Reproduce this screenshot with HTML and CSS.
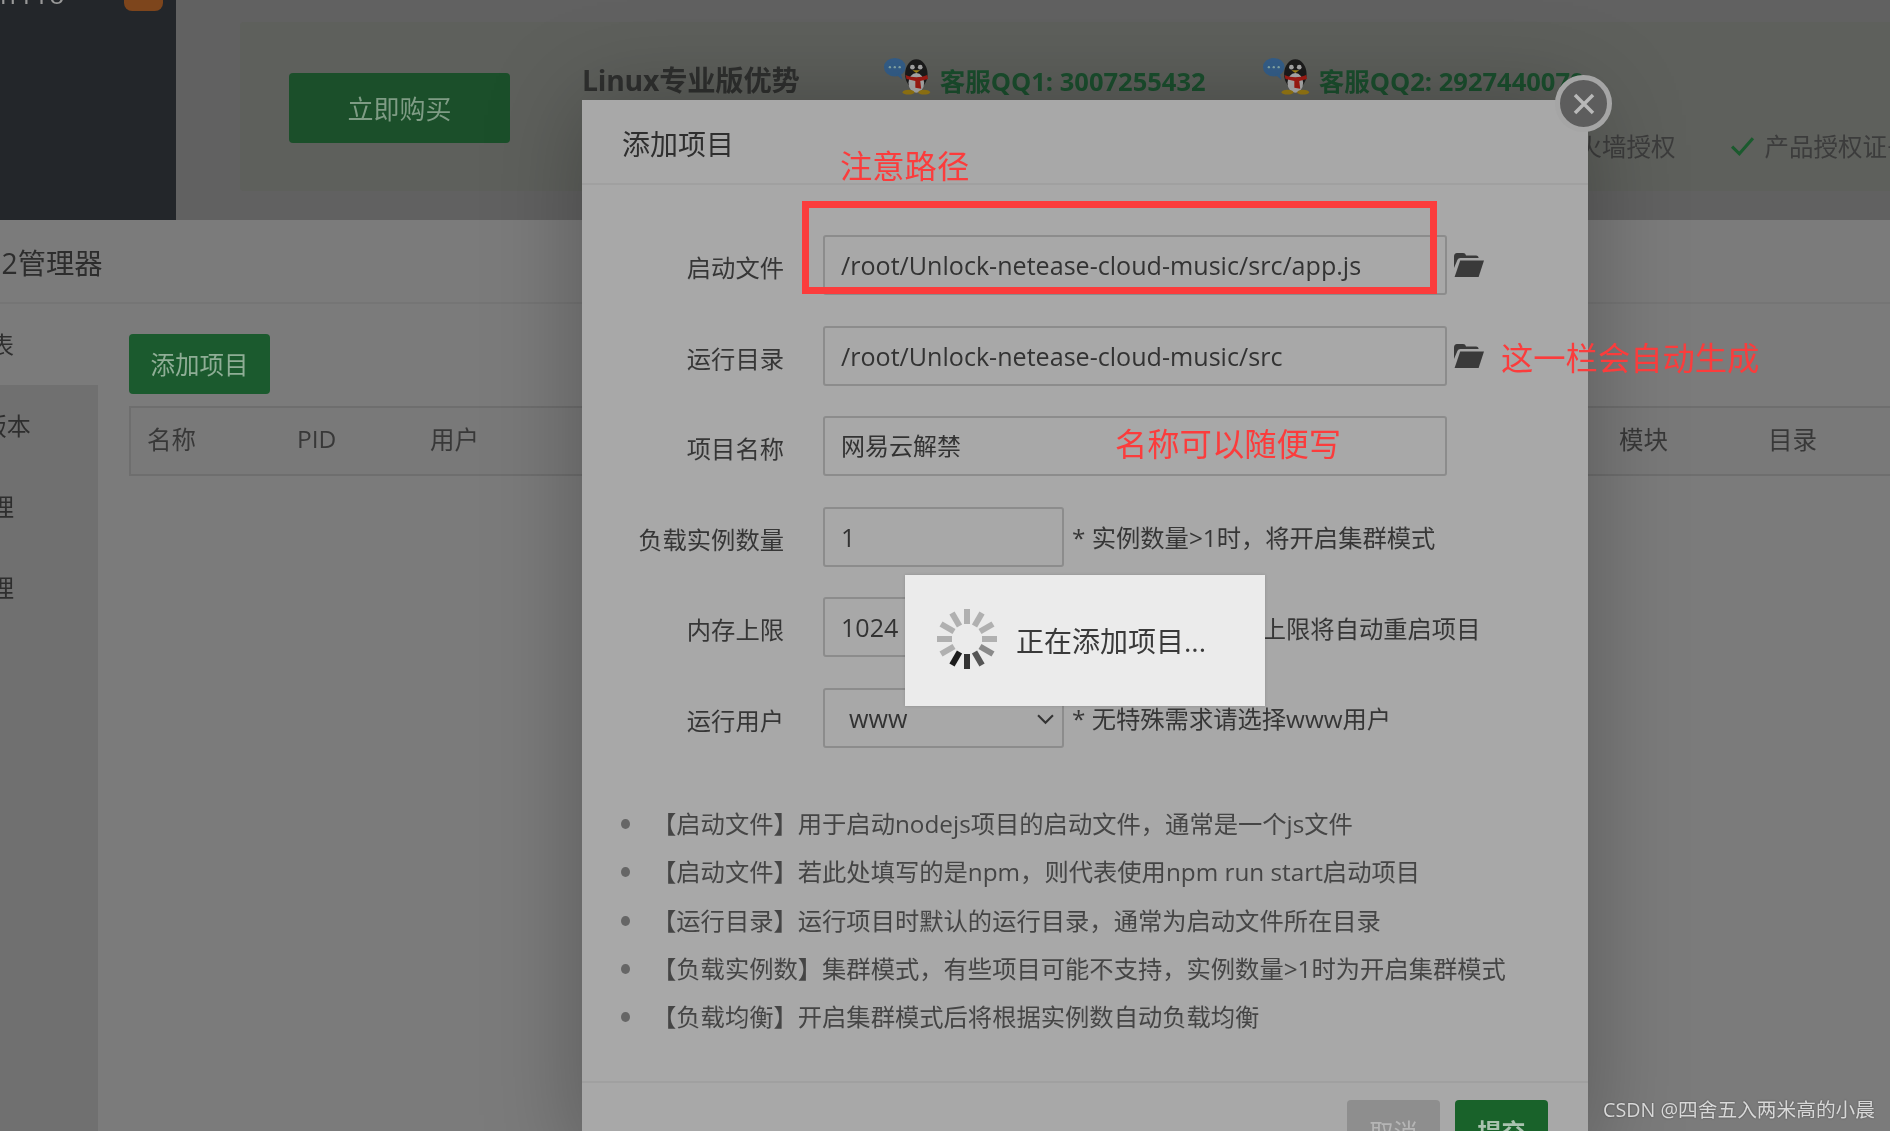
FILE: index.html
```html
<!DOCTYPE html>
<html lang="zh-CN">
<head>
<meta charset="utf-8">
<title>添加项目</title>
<link rel="stylesheet" href="styles.css">
</head>
<body>
<div class="page">
  <header class="top">
    <aside class="side"><span class="side-name">n Pro</span><span class="side-badge"></span></aside>
    <div class="top-main">
      <section class="promo">
        <button class="buy">立即购买</button>
        <div class="promo-body">
          <div class="promo-head">
            <h2 class="promo-title">Linux专业版优势</h2>
            <span class="qq">
              <svg class="qq-icon" viewBox="0 0 48 38"><use href="#penguin"/></svg>客服QQ1: 3007255432
            </span>
            <span class="qq">
              <svg class="qq-icon" viewBox="0 0 48 38"><use href="#penguin"/></svg>客服QQ2: 2927440079
            </span>
          </div>
          <ul class="perks">
            <li class="perk"><svg class="tick" viewBox="0 0 24 24"><path d="M2 13l7 7L22 5"/></svg>防火墙授权</li>
            <li class="perk"><svg class="tick" viewBox="0 0 24 24"><path d="M2 13l7 7L22 5"/></svg>产品授权证书</li>
          </ul>
        </div>
      </section>
    </div>
  </header>
  <main class="panel">
    <div class="panel-title">PM2管理器</div>
    <div class="panel-body">
      <nav class="tabs">
        <div class="tab tab-on">项目列表</div>
        <div class="tab tab-ver">Node版本</div>
        <div class="tab">模块管理</div>
        <div class="tab">日志管理</div>
      </nav>
      <div class="panel-main">
        <button class="add">添加项目</button>
        <div class="thead">
          <span class="th th-name">名称</span>
          <span class="th th-pid">PID</span>
          <span class="th th-user">用户</span>
          <span class="th th-fill"></span>
          <span class="th th-mod">模块</span>
          <span class="th th-dir">目录</span>
        </div>
      </div>
    </div>
  </main>

  <div class="modal">
    <div class="modal-head">添加项目</div>
    <div class="modal-body">
      <div class="row">
        <label class="lbl">启动文件</label>
        <div class="field field-wide">/root/Unlock-netease-cloud-music/src/app.js</div>
        <svg class="folder" viewBox="0 0 30 24"><use href="#folder"/></svg>
      </div>
      <div class="row">
        <label class="lbl">运行目录</label>
        <div class="field field-wide">/root/Unlock-netease-cloud-music/src</div>
        <svg class="folder" viewBox="0 0 30 24"><use href="#folder"/></svg>
      </div>
      <div class="row">
        <label class="lbl">项目名称</label>
        <div class="field field-wide field-cjk">网易云解禁</div>
      </div>
      <div class="row">
        <label class="lbl">负载实例数量</label>
        <div class="field field-small">1</div>
        <span class="hint">* 实例数量&gt;1时，将开启集群模式</span>
      </div>
      <div class="row">
        <label class="lbl">内存上限</label>
        <div class="field field-small">1024</div>
        <span class="hint">* 内存使用超过此上限将自动重启项目</span>
      </div>
      <div class="row">
        <label class="lbl">运行用户</label>
        <div class="field field-small field-select">www
          <svg class="chev" viewBox="0 0 16 10"><path d="M1 1l7 7 7-7"/></svg>
        </div>
        <span class="hint">* 无特殊需求请选择www用户</span>
      </div>
      <ul class="notes">
        <li>【启动文件】用于启动nodejs项目的启动文件，通常是一个js文件</li>
        <li>【启动文件】若此处填写的是npm，则代表使用npm run start启动项目</li>
        <li>【运行目录】运行项目时默认的运行目录，通常为启动文件所在目录</li>
        <li>【负载实例数】集群模式，有些项目可能不支持，实例数量&gt;1时为开启集群模式</li>
        <li>【负载均衡】开启集群模式后将根据实例数自动负载均衡</li>
      </ul>
    </div>
    <div class="modal-foot">
      <button class="btn btn-cancel">取消</button>
      <button class="btn btn-ok">提交</button>
    </div>
  </div>

  <button class="close" aria-label="关闭">
    <svg viewBox="0 0 24 24"><path d="M3 3l18 18M21 3L3 21"/></svg>
  </button>

  <div class="mark mark-box"></div>
  <div class="note-red note-path">注意路径</div>
  <div class="note-red note-auto">这一栏会自动生成</div>
  <div class="note-red note-name">名称可以随便写</div>

  <div class="toast">
    <svg class="spin" viewBox="0 0 64 64">
      <g stroke-width="6">
        <line class="s" x1="32" y1="2" x2="32" y2="17"/>
        <line class="s" x1="32" y1="2" x2="32" y2="17" transform="rotate(30 32 32)"/>
        <line class="s" x1="32" y1="2" x2="32" y2="17" transform="rotate(60 32 32)"/>
        <line class="s" x1="32" y1="2" x2="32" y2="17" transform="rotate(90 32 32)"/>
        <line class="s2" x1="32" y1="2" x2="32" y2="17" transform="rotate(120 32 32)"/>
        <line class="s3" x1="32" y1="2" x2="32" y2="17" transform="rotate(150 32 32)"/>
        <line class="s4" x1="32" y1="2" x2="32" y2="17" transform="rotate(180 32 32)"/>
        <line class="s5" x1="32" y1="2" x2="32" y2="17" transform="rotate(210 32 32)"/>
        <line class="s" x1="32" y1="2" x2="32" y2="17" transform="rotate(240 32 32)"/>
        <line class="s" x1="32" y1="2" x2="32" y2="17" transform="rotate(270 32 32)"/>
        <line class="s" x1="32" y1="2" x2="32" y2="17" transform="rotate(300 32 32)"/>
        <line class="s" x1="32" y1="2" x2="32" y2="17" transform="rotate(330 32 32)"/>
      </g>
    </svg>
    <span class="toast-text">正在添加项目...</span>
  </div>

  <div class="wm">CSDN @四舍五入两米高的小晨</div>
</div>

<svg class="defs" width="0" height="0">
  <defs>
    <g id="folder">
      <path fill="#3a3a3a" d="M0 20V3.500C0 1.500 1.200 0 3 0h6c1.600 0 2.600.8 3 2.600h10c1.600 0 2.600 1 2.600 2.400H6.400c-1.400 0-2.400.7-3 2L0 15z"/>
      <path fill="#3a3a3a" d="M6.200 7.600H30L24.600 24H.6z"/>
    </g>
    <g id="penguin">
      <ellipse cx="11" cy="10" rx="11" ry="9.500" fill="#35608c"/>
      <path d="M13 18l6 5-2-7z" fill="#35608c"/>
      <circle cx="6" cy="10" r="1.200" fill="#8aa"/><circle cx="11" cy="10" r="1.200" fill="#8aa"/><circle cx="16" cy="10" r="1.200" fill="#8aa"/>
      <ellipse cx="33" cy="17" rx="11.500" ry="15" fill="#1c1c1c"/>
      <ellipse cx="33" cy="26" rx="8" ry="10" fill="#b0b0b0"/>
      <circle cx="29" cy="10" r="2.400" fill="#aaa"/><circle cx="37" cy="10" r="2.400" fill="#aaa"/>
      <path d="M29 13h8l-4 3z" fill="#a88a1a"/>
      <path d="M22 18c7 3 15 3 22 0l1 4-8 2 1 8-6-1 0-7-9-2z" fill="#a51c14"/>
      <ellipse cx="25" cy="35.500" rx="6" ry="2.500" fill="#9c7d14"/><ellipse cx="41" cy="35.500" rx="6" ry="2.500" fill="#9c7d14"/>
    </g>
  </defs>
</svg>
</body>
</html>
```
FILE: styles.css
```css
* { box-sizing: border-box; }
html, body { margin: 0; padding: 0; background: #7a7a7a; }
body { font-family: "Open Sans", "Noto Sans CJK SC", sans-serif; }
ul { list-style: none; margin: 0; padding: 0; }
button { font: inherit; border: 0; padding: 0; }
.defs { position: absolute; }

.page {
  position: relative;
  width: 1890px;
  height: 1131px;
  overflow: hidden;
  display: flex;
  flex-direction: column;
  filter: blur(.45px);
}

/* dimmed page behind the dialog */
.top { height: 220px; display: flex; background: #616161; flex: none; }
.side { width: 176px; background: #23262a; position: relative; flex: none; overflow: hidden; }
.side-name { position: absolute; left: 0; top: -24px; color: #999; font-size: 26px; white-space: nowrap; }
.side-badge { position: absolute; left: 124px; top: -10px; width: 39px; height: 21px; background: #7d451c; border-radius: 8px; }
.top-main { flex: 1; padding: 22px 0 29px 64px; min-width: 0; overflow: hidden; }
.promo { height: 169px; background: #5e605c; display: flex; padding: 51px 0 0 49px; gap: 72px; border-radius: 4px 0 0 4px; }
.buy { width: 221px; height: 70px; background: #1b4f2a; color: #7f9c85; font-size: 26px; border-radius: 4px; flex: none; font-family: inherit; }
.promo-body { min-width: 0; flex: 1; margin-top: -15px; }
.promo-head { display: flex; align-items: center; height: 44px; white-space: nowrap; }
.promo-title { margin: 0 84px 0 0; font-size: 28.300px; font-weight: 700; color: #2f302f; line-height: 40px; letter-spacing: -.2px; }
.qq { display: inline-flex; align-items: center; font-size: 25.500px; font-weight: 700; color: #1b4f2e; width: 379px; line-height: 42px; flex: none; padding-top: 2px; }
.qq-icon { width: 47px; height: 38px; margin-right: 9px; margin-top: -10px; flex: none; }
.perks { display: flex; margin: 26px 0 0 936px; gap: 54px; width: max-content; }
.perk { display: flex; align-items: center; color: #3c3c3c; font-size: 24.500px; gap: 10px; white-space: nowrap; }
.tick { width: 25px; height: 25px; fill: none; stroke: #1b5a2e; stroke-width: 3; }

.panel { flex: 1; background: #7b7b7b; display: flex; flex-direction: column; min-height: 0; }
.panel-title { height: 84px; line-height: 86px; font-size: 28.300px; color: #2d2d2d; border-bottom: 2px solid #757575; margin-left: -41px; flex: none; }
.panel-body { flex: 1; display: flex; }
.tabs { width: 98px; flex: none; background: #707070; overflow: hidden; }
.tab { height: 81px; line-height: 81px; font-size: 24px; color: #2e2e2e; white-space: nowrap; text-indent: -82px; }
.tab-ver { text-indent: -78px; }
.tab-on { background: #7b7b7b; }
.panel-main { flex: 1; padding: 30px 0 0 31px; min-width: 0; }
.add { display: block; width: 141px; height: 60px; background: #1b5a2e; color: #8fae96; font-size: 24.500px; border-radius: 4px; padding-bottom: 2px; }
.thead { margin-top: 12px; height: 70px; border: 2px solid #6e6e6e; border-right: 0; display: flex; align-items: center; font-size: 24.500px; color: #383838; white-space: nowrap; background: #797979; padding-bottom: 6px; }
.th-name { margin-left: 16px; width: 150px; }
.th-pid { width: 133px; }
.th-user { width: 100px; }
.th-fill { flex: 1; }
.th-mod { width: 149px; }
.th-dir { width: 122px; }

/* dialog */
.modal {
  position: absolute;
  left: 582px;
  top: 100px;
  width: 1006px;
  height: 1060px;
  background: #a8a8a8;
  box-shadow: 0 0 90px rgba(0, 0, 0, .28);
  display: flex;
  flex-direction: column;
  color: #343434;
  font-size: 24.300px;
}
.modal-head { height: 85px; padding: 0 0 0 40px; line-height: 88px; font-size: 28px; color: #2f2f2f; border-bottom: 2px solid #a0a0a0; flex: none; }
.modal-body { padding: 50px 0 0 0; height: 896px; flex: none; }
.row { display: flex; align-items: center; height: 60px; margin-bottom: 30.600px; }
.lbl { width: 202px; text-align: right; margin-right: 39px; flex: none; color: #363636; padding-top: 3px; }
.field { height: 60px; border: 2px solid #8c8c8c; border-radius: 3px; padding: 0 16px; line-height: 56px; color: #333; flex: none; font-size: 25.100px; position: relative; }
.field-wide { width: 624px; }
.field-small { width: 241px; }
.field-cjk { font-size: 24px; }
.field-select { padding-left: 24px; }
.chev { position: absolute; right: 8px; top: 24px; width: 17px; height: 11px; fill: none; stroke: #333; stroke-width: 2; }
.folder { width: 30px; height: 24px; margin-left: 7px; flex: none; }
.hint { margin-left: 8px; white-space: nowrap; color: #363636; }
.notes { margin: 52px 0 0 0; padding: 0 0 0 70px; }
.notes li { position: relative; height: 48.300px; line-height: 48px; color: #454545; white-space: nowrap; }
.notes li::before { content: ""; position: absolute; left: -31px; top: 19px; width: 9px; height: 10px; border-radius: 50%; background: #666; }
.modal-foot { flex: 1; display: flex; justify-content: flex-end; gap: 15px; padding: 17px 40px 0 0; border-top: 2px solid #a0a0a0; }
.btn { width: 93px; height: 60px; border-radius: 4px; font-size: 24px; }
.btn-cancel { background: #8e8e8e; color: #b5b5b5; }
.btn-ok { background: #19622a; color: #a9c2ae; font-weight: 700; }

.close {
  position: absolute;
  left: 1555px;
  top: 75px;
  width: 57px;
  height: 57px;
  border-radius: 50%;
  background: #5d5d5d;
  border: 5px solid #a5a5a5;
  display: flex;
  align-items: center;
  justify-content: center;
}
.close svg { width: 24px; height: 24px; fill: none; stroke: #b8b8b8; stroke-width: 3.500; }

/* screenshot annotations */
.mark-box { position: absolute; left: 802px; top: 201px; width: 635px; height: 93px; border: 7px solid #fb3c3c; }
.note-red { position: absolute; color: #fb3c3c; font-size: 32.300px; line-height: 40px; font-family: "Noto Sans CJK SC", sans-serif; white-space: nowrap; }
.note-path { left: 840px; top: 144px; }
.note-auto { left: 1501px; top: 336px; }
.note-name { left: 1115px; top: 422px; }

.toast { position: absolute; left: 905px; top: 575px; width: 360px; height: 131px; background: #ebebeb; display: flex; align-items: center; padding-left: 30px; box-shadow: 0 0 3px rgba(0,0,0,.15); }
.spin { width: 64px; height: 64px; flex: none; margin-top: -3px; }
.s { stroke: #b0b0b0; }
.s2 { stroke: #8a8a8a; }
.s3 { stroke: #555; }
.s4 { stroke: #333; }
.s5 { stroke: #1c1c1c; }
.toast-text { margin-left: 17px; font-size: 28px; color: #3a3a3a; white-space: nowrap; margin-bottom: 1px; }

.wm { position: absolute; left: 1603px; top: 1096px; font-size: 19.700px; line-height: 28px; color: #d8d8d8; white-space: nowrap; text-shadow: 0 0 2px rgba(0,0,0,.4); }
```
